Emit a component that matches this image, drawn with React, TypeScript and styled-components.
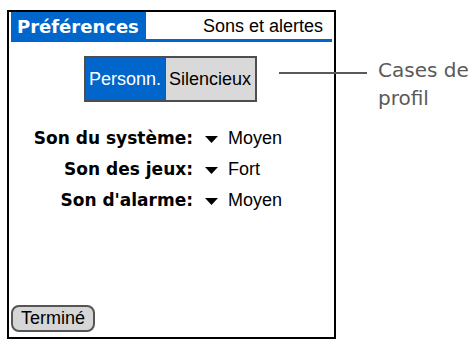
import React from "react";
import styled, { createGlobalStyle } from "styled-components";

const Global = createGlobalStyle`
  html, body { margin: 0; padding: 0; background: #ffffff; }
  body { width: 473px; height: 345px; overflow: hidden; }
`;

const Page = styled.div`
  position: relative;
  width: 473px;
  height: 345px;
  padding: 10px 0 0 7px;
  box-sizing: border-box;
`;

const Screen = styled.div`
  width: 329px;
  height: 329px;
  box-sizing: border-box;
  border: 2px solid #000;
  display: flex;
  flex-direction: column;
  background: #fff;
`;

const Header = styled.div`
  display: flex;
  justify-content: space-between;
  align-items: flex-end;
  margin: 0 2px;
  border-bottom: 3px solid #0066cc;
`;

const Tab = styled.div`
  background: #0066cc;
  color: #fff;
  font-family: "DejaVu Sans", sans-serif;
  font-weight: bold;
  font-size: 18px;
  line-height: 25px;
  padding: 2px 7px 0 6px;
`;

const ScreenTitle = styled.div`
  font-family: "Liberation Sans", sans-serif;
  font-size: 18px;
  line-height: 25px;
  padding: 2px 9px 0 0;
  color: #000;
`;

const Body = styled.div`
  flex: 1;
  display: flex;
  flex-direction: column;
`;

const Segmented = styled.div`
  align-self: center;
  margin: 14px 0 0 -3px;
  display: flex;
  height: 46px;
  box-sizing: border-box;
  border: 2px solid #4e4e4e;
`;

const Segment = styled.div<{ $active?: boolean; $w: number }>`
  width: ${(p) => p.$w}px;
  display: flex;
  align-items: center;
  justify-content: center;
  font-family: "Liberation Sans", sans-serif;
  font-size: 18px;
  background: ${(p) => (p.$active ? "#0066cc" : "#d9d9d9")};
  color: ${(p) => (p.$active ? "#fff" : "#000")};
  & + & {
    border-left: 1px solid #4e4e4e;
  }
`;

const Rows = styled.div`
  margin-top: 21px;
  display: grid;
  grid-template-columns: 184px auto;
  column-gap: 12px;
  grid-auto-rows: 31px;
`;

const Label = styled.div`
  font-family: "DejaVu Sans", sans-serif;
  font-weight: bold;
  font-size: 17px;
  line-height: 31px;
  text-align: right;
  white-space: nowrap;
  color: #000;
`;

const Value = styled.div`
  display: flex;
  align-items: center;
  gap: 10px;
  font-family: "Liberation Sans", sans-serif;
  font-size: 18px;
  line-height: 31px;
  color: #000;
`;

const Arrow = styled.svg`
  width: 13px;
  height: 7px;
  flex: none;
  margin-top: 1px;
`;

const Footer = styled.div`
  margin-top: auto;
  padding: 0 0 5px 2px;
`;

const DoneButton = styled.div`
  display: inline-block;
  width: 84px;
  box-sizing: border-box;
  border: 2px solid #555;
  border-radius: 8px;
  background: #d6d6d6;
  font-family: "Liberation Sans", sans-serif;
  font-size: 18px;
  line-height: 23px;
  text-align: center;
  color: #000;
`;

const Callout = styled.div`
  position: absolute;
  left: 279px;
  top: 56px;
  display: flex;
  align-items: flex-start;
`;

const Leader = styled.div`
  width: 88px;
  height: 2px;
  margin-top: 16px;
  background: #5a5a5a;
`;

const CalloutText = styled.div`
  margin-left: 11px;
  font-family: "DejaVu Sans", sans-serif;
  font-size: 20px;
  line-height: 28px;
  color: #5a5a5a;
`;

const rows = [
  { label: "Son du système:", value: "Moyen" },
  { label: "Son des jeux:", value: "Fort" },
  { label: "Son d'alarme:", value: "Moyen" },
];

const DownArrow = () => (
  <Arrow viewBox="0 0 13 7">
    <polygon points="0,0 13,0 6.5,7" fill="#000" />
  </Arrow>
);

export default function App() {
  return (
    <>
      <Global />
      <Page>
        <Screen>
          <Header>
            <Tab>Préférences</Tab>
            <ScreenTitle>Sons et alertes</ScreenTitle>
          </Header>
          <Body>
            <Segmented>
              <Segment $active $w={79}>Personn.</Segment>
              <Segment $w={89}>Silencieux</Segment>
            </Segmented>
            <Rows>
              {rows.map((r) => (
                <React.Fragment key={r.label}>
                  <Label>{r.label}</Label>
                  <Value>
                    <DownArrow />
                    {r.value}
                  </Value>
                </React.Fragment>
              ))}
            </Rows>
            <Footer>
              <DoneButton>Terminé</DoneButton>
            </Footer>
          </Body>
        </Screen>
        <Callout>
          <Leader />
          <CalloutText>
            Cases de
            <br />
            profil
          </CalloutText>
        </Callout>
      </Page>
    </>
  );
}
